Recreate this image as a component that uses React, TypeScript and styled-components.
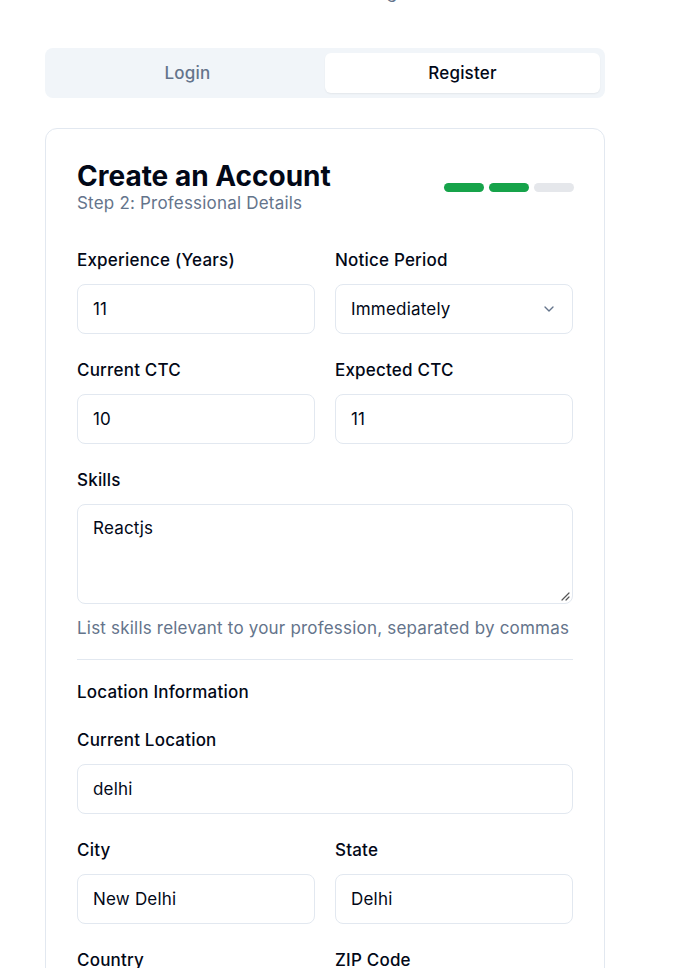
import React from "react";
import styled, { createGlobalStyle } from "styled-components";

const Global = createGlobalStyle`
  html, body { margin: 0; padding: 0; background: #ffffff; }
  body {
    font-family: Inter, "Noto Sans", sans-serif;
    font-size: 17px;
    letter-spacing: 0.2px;
    color: #020817;
    overflow: hidden;
  }
  * { box-sizing: border-box; }
`;

const Page = styled.div`
  width: 560px;
  margin: -20px 0 0 45px;
  display: flex;
  flex-direction: column;
`;

const Intro = styled.p`
  margin: 0 0 44px;
  text-align: center;
  font-size: 17px;
  line-height: 24px;
  color: #64748b;
`;

const Tabs = styled.div`
  display: grid;
  grid-template-columns: 1fr 1fr;
  height: 50px;
  padding: 5px;
  background: #f1f5f9;
  border-radius: 8px;
`;

const Tab = styled.button<{ $active?: boolean }>`
  border: none;
  border-radius: 6px;
  font: 500 17px/24px Inter, sans-serif;
  letter-spacing: 0.2px;
  color: ${(p) => (p.$active ? "#020817" : "#64748b")};
  background: ${(p) => (p.$active ? "#ffffff" : "transparent")};
  box-shadow: ${(p) => (p.$active ? "0 1px 2px rgba(0,0,0,0.06)" : "none")};
  padding: 0;
`;

const Card = styled.div`
  margin-top: 30px;
  border: 1px solid #e2e8f0;
  border-radius: 12px;
  padding: 31px 31px 40px;
  display: flex;
  flex-direction: column;
`;

const Header = styled.div`
  display: flex;
  align-items: center;
  justify-content: space-between;
  margin-bottom: 34px;
`;

const Title = styled.h1`
  margin: 0;
  font-size: 28px;
  line-height: 32px;
  font-weight: 700;
  letter-spacing: 0;
  color: #020817;
`;

const Subtitle = styled.p`
  margin: 0;
  font-size: 17px;
  line-height: 22px;
  color: #64748b;
`;

const Steps = styled.div`
  display: flex;
  gap: 5px;
  margin-top: 1px;
  margin-right: -1px;
`;

const Step = styled.span<{ $done?: boolean }>`
  width: 40px;
  height: 9px;
  border-radius: 999px;
  background: ${(p) => (p.$done ? "#16a34a" : "#e5e7eb")};
`;

const Form = styled.div`
  display: flex;
  flex-direction: column;
  gap: 24px;
`;

const Row = styled.div`
  display: grid;
  grid-template-columns: 1fr 1fr;
  gap: 20px;
`;

const Field = styled.div`
  display: flex;
  flex-direction: column;
  gap: 12px;
`;

const Label = styled.label`
  font-size: 17px;
  line-height: 24px;
  font-weight: 500;
  color: #020817;
`;

const Input = styled.div`
  height: 50px;
  border: 1px solid #e2e8f0;
  border-radius: 8px;
  padding: 0 15px;
  display: flex;
  align-items: center;
  justify-content: space-between;
  font-size: 17px;
  color: #020817;
`;

const TextArea = styled.div`
  position: relative;
  height: 100px;
  border: 1px solid #e2e8f0;
  border-radius: 8px;
  padding: 11px 15px;
  font-size: 17px;
  line-height: 24px;
  color: #020817;
`;

const Grip = styled.svg`
  position: absolute;
  right: 2px;
  bottom: 2px;
`;

const SkillsGroup = styled.div`
  display: flex;
  flex-direction: column;
  gap: 12px;
`;

const Help = styled.p`
  margin: 0;
  font-size: 17px;
  line-height: 24px;
  color: #64748b;
  white-space: nowrap;
`;

const Divider = styled.hr`
  margin: -5px 0 -4px;
  border: none;
  border-top: 1px solid #e2e8f0;
`;

const SectionTitle = styled.h3`
  margin: 0;
  font-size: 17px;
  line-height: 24px;
  font-weight: 500;
  color: #020817;
`;

const Chevron = () => (
  <svg width="16" height="16" viewBox="0 0 24 24" fill="none" stroke="#64748b" strokeWidth="2" strokeLinecap="round" strokeLinejoin="round">
    <path d="m6 9 6 6 6-6" />
  </svg>
);

export default function App() {
  return (
    <>
      <Global />
      <Page>
        <Intro>Fill in the details below to get started</Intro>
        <Tabs>
          <Tab>Login</Tab>
          <Tab $active>Register</Tab>
        </Tabs>
        <Card>
          <Header>
            <div>
              <Title>Create an Account</Title>
              <Subtitle>Step 2: Professional Details</Subtitle>
            </div>
            <Steps>
              <Step $done />
              <Step $done />
              <Step />
            </Steps>
          </Header>
          <Form>
            <Row>
              <Field>
                <Label>Experience (Years)</Label>
                <Input>11</Input>
              </Field>
              <Field>
                <Label>Notice Period</Label>
                <Input>
                  Immediately
                  <Chevron />
                </Input>
              </Field>
            </Row>
            <Row>
              <Field>
                <Label>Current CTC</Label>
                <Input>10</Input>
              </Field>
              <Field>
                <Label>Expected CTC</Label>
                <Input>11</Input>
              </Field>
            </Row>
            <SkillsGroup>
              <Label>Skills</Label>
              <TextArea>
                Reactjs
                <Grip width="10" height="10" viewBox="0 0 10 10">
                  <path d="M9 2 L2 9 M9 6 L6 9" stroke="#555" strokeWidth="1.2" strokeLinecap="round" />
                </Grip>
              </TextArea>
              <Help>List skills relevant to your profession, separated by commas</Help>
            </SkillsGroup>
            <Divider />
            <SectionTitle>Location Information</SectionTitle>
            <Field>
              <Label>Current Location</Label>
              <Input>delhi</Input>
            </Field>
            <Row>
              <Field>
                <Label>City</Label>
                <Input>New Delhi</Input>
              </Field>
              <Field>
                <Label>State</Label>
                <Input>Delhi</Input>
              </Field>
            </Row>
            <Row>
              <Field>
                <Label>Country</Label>
                <Input>India</Input>
              </Field>
              <Field>
                <Label>ZIP Code</Label>
                <Input>110001</Input>
              </Field>
            </Row>
          </Form>
        </Card>
      </Page>
    </>
  );
}
